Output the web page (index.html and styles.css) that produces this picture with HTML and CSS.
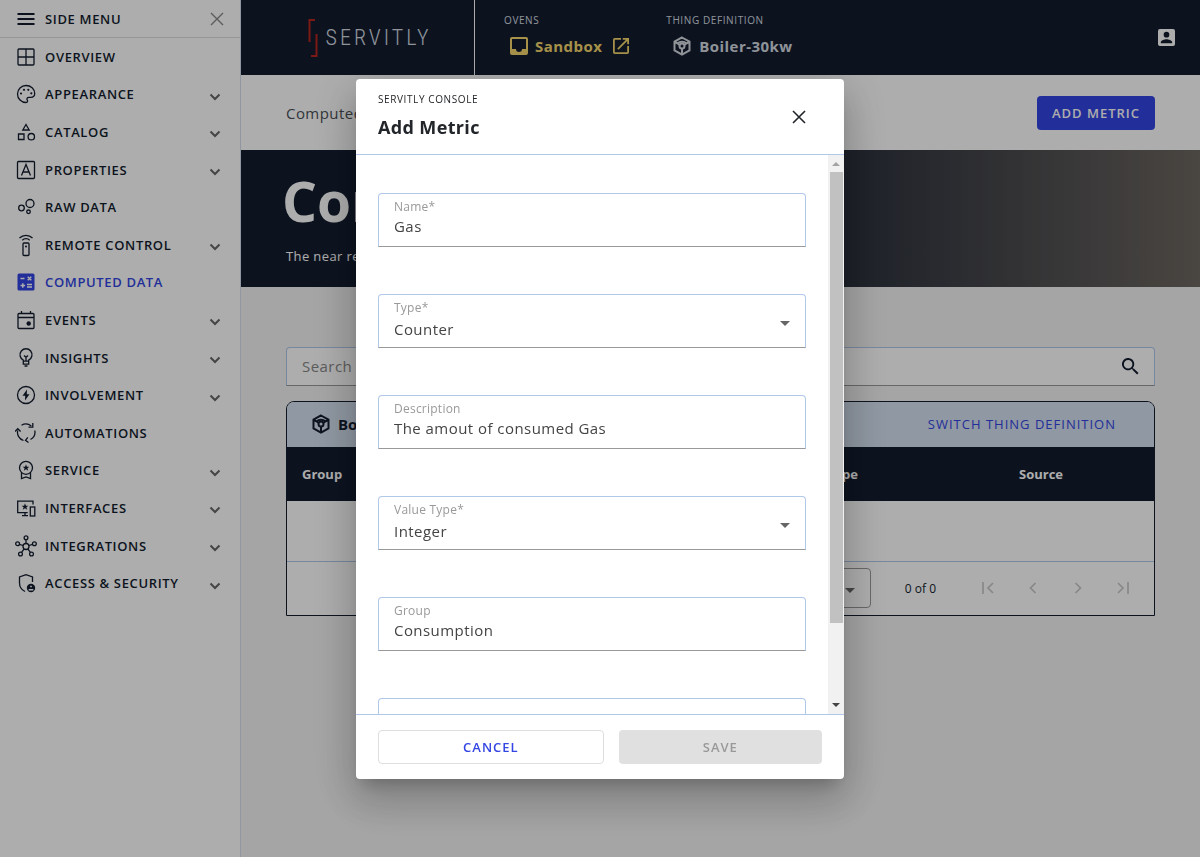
FILE: index.html
```html
<!DOCTYPE html>
<html lang="en">
<head>
	<meta charset="UTF-8">
	<meta name="viewport" content="width=device-width, initial-scale=1">
	<title>Servitly Console</title>
	<link rel="stylesheet" href="styles.css">
</head>
<body>
	<div class="app">
		<aside class="sidebar">
			<div class="side-head">
				<svg class="icon" viewBox="0 0 20 20"><path d="M1.500 5h17M1.500 10h17M1.500 15h17" stroke-width="2"/></svg>
				<span>SIDE MENU</span>
				<button class="side-close" type="button" aria-label="Close menu">
					<svg viewBox="0 0 14 14"><path d="M1 1l12 12M13 1L1 13"/></svg>
				</button>
			</div>
			<nav class="side-nav">
				<a href="#"><svg class="icon" viewBox="0 0 20 20"><rect x="2" y="2" width="16" height="16" rx="1"/><path d="M10 2v16M2 10h16"/></svg><span>OVERVIEW</span></a>
				<a href="#"><svg class="icon" viewBox="0 0 20 20"><path d="M10 1.500a8.500 8.500 0 0 0 0 17c1.500 0 2-1.200 1.300-2.300-.9-1.400-.1-2.900 1.500-2.900h2c2.300 0 3.900-1.500 3.900-3.800 0-4.500-3.900-8-8.700-8z"/><g class="fill"><circle cx="5" cy="9.500" r="1.100"/><circle cx="8" cy="5.800" r="1.100"/><circle cx="12.300" cy="5.800" r="1.100"/><circle cx="15.300" cy="9.300" r="1.100"/></g></svg><span>APPEARANCE</span><svg class="chev" viewBox="0 0 12 8"><path d="M1.500 1.500L6 6l4.500-4.500"/></svg></a>
				<a href="#"><svg class="icon" viewBox="0 0 20 20"><path d="M10 2.500L13.200 8H6.800zM2.500 12h5.500v5.500H2.500z"/><circle cx="15.300" cy="14.700" r="3.200"/></svg><span>CATALOG</span><svg class="chev" viewBox="0 0 12 8"><path d="M1.500 1.500L6 6l4.500-4.500"/></svg></a>
				<a href="#"><svg class="icon" viewBox="0 0 20 20"><rect x="1.500" y="1.500" width="17" height="17" rx="1"/><path d="M5.500 15.500L10 4.500l4.500 11M7 12h6"/></svg><span>PROPERTIES</span><svg class="chev" viewBox="0 0 12 8"><path d="M1.500 1.500L6 6l4.500-4.500"/></svg></a>
				<a href="#"><svg class="icon" viewBox="0 0 20 20"><circle cx="14" cy="6.500" r="4"/><circle cx="5.500" cy="11" r="2.800"/><circle cx="12.500" cy="14.800" r="1.800"/></svg><span>RAW DATA</span></a>
				<a href="#"><svg class="icon tall" viewBox="0 0 20 24"><rect x="7" y="10" width="6" height="12.500" rx="1"/><path d="M3.500 5c3.500-3.600 9.500-3.600 13 0M6.300 7.200c2-2 5.400-2 7.400 0"/><circle class="fill" cx="10" cy="13.500" r="1"/></svg><span>REMOTE CONTROL</span><svg class="chev" viewBox="0 0 12 8"><path d="M1.500 1.500L6 6l4.500-4.500"/></svg></a>
				<a class="active" href="#"><svg class="icon" viewBox="0 0 20 20"><rect class="fill" x="1.500" y="1.500" width="17" height="17" rx="1.500"/><path class="knock" d="M4.500 6.500h4M11.700 4.700l3.600 3.600M15.300 4.700l-3.600 3.600M4.500 13.500h4.600M6.800 11.200v4.600M11 12.500h5M11 15h5"/></svg><span>COMPUTED DATA</span></a>
				<a href="#"><svg class="icon" viewBox="0 0 20 20"><rect x="2" y="3.500" width="16" height="15" rx="1"/><path d="M2 7.500h16M5.500 1v2.500M14.500 1v2.500"/><circle class="fill" cx="12.700" cy="13.500" r="2.200"/></svg><span>EVENTS</span><svg class="chev" viewBox="0 0 12 8"><path d="M1.500 1.500L6 6l4.500-4.500"/></svg></a>
				<a href="#"><svg class="icon" viewBox="0 0 20 20"><path d="M7.300 13.200v-1.100a6 6 0 1 1 5.400 0v1.100zM7.300 13.200v3h5.400v-3M8 7.500l2 1.800 2-1.800M10 9.300v3.900M8.500 18h3"/></svg><span>INSIGHTS</span><svg class="chev" viewBox="0 0 12 8"><path d="M1.500 1.500L6 6l4.500-4.500"/></svg></a>
				<a href="#"><svg class="icon" viewBox="0 0 20 20"><circle cx="10" cy="10" r="8.500"/><path class="fill" d="M11 4.500L6.500 10.800h2.700L9 15.500l4.500-6.300h-2.700z"/></svg><span>INVOLVEMENT</span><svg class="chev" viewBox="0 0 12 8"><path d="M1.500 1.500L6 6l4.500-4.500"/></svg></a>
				<a href="#"><svg class="icon big" viewBox="0 0 22 22"><path d="M6.500 3.200a8.500 8.500 0 0 1 9.800.8M19.800 8.500a8.500 8.500 0 0 1-4.300 9M8.500 18.500a8.500 8.500 0 0 1-5.800-10"/><path d="M17.800 1v4.200h-4.300M0 9.500l2.800-2.800 2.800 2.800M13.500 20.500l-3-2.200 2.300-3"/></svg><span>AUTOMATIONS</span></a>
				<a href="#"><svg class="icon" viewBox="0 0 20 20"><circle cx="10" cy="7.800" r="6.500"/><path d="M5.500 12.800v5.700l4.500-1.500 4.500 1.500v-5.700"/><path class="fill" d="M10 4.300l.9 2.400h2.500l-2 1.500.8 2.500-2.200-1.500-2.200 1.500.8-2.500-2-1.500h2.500z"/></svg><span>SERVICE</span><svg class="chev" viewBox="0 0 12 8"><path d="M1.500 1.500L6 6l4.500-4.500"/></svg></a>
				<a href="#"><svg class="icon" viewBox="0 0 20 20"><path d="M17 6.500V3.200H1.700v11.500h10M9 14.700v3M6 17.700h6"/><rect x="14.300" y="9" width="4.500" height="9"/><path class="fill" d="M9 5.300l.9 2.400h2.500l-2 1.500.8 2.500L9 10.200l-2.200 1.500.8-2.500-2-1.500h2.500z"/></svg><span>INTERFACES</span><svg class="chev" viewBox="0 0 12 8"><path d="M1.500 1.500L6 6l4.500-4.500"/></svg></a>
				<a href="#"><svg class="icon big" viewBox="0 0 22 22"><circle cx="11" cy="11.500" r="3"/><circle cx="11" cy="2.700" r="1.900"/><circle cx="2.600" cy="8.700" r="1.900"/><circle cx="19.400" cy="8.700" r="1.900"/><circle cx="5.500" cy="19" r="1.900"/><circle cx="16.500" cy="19" r="1.900"/><path d="M11 4.600v3.900M4.400 9.300l3.700 1.200M17.600 9.300l-3.700 1.200M6.600 17.400l2.600-3.500M15.400 17.400l-2.600-3.500"/></svg><span>INTEGRATIONS</span><svg class="chev" viewBox="0 0 12 8"><path d="M1.500 1.500L6 6l4.500-4.500"/></svg></a>
				<a href="#"><svg class="icon" viewBox="0 0 20 20"><path d="M9 18.500c-3.500-1.700-5.500-4.500-5.500-8.500V4L10 1.600 16.500 4v5"/><circle class="fill" cx="15" cy="15" r="4.200"/><path class="knock" d="M12.700 16.800h4.600M14.200 13.400h1.600"/></svg><span>ACCESS &amp; SECURITY</span><svg class="chev" viewBox="0 0 12 8"><path d="M1.500 1.500L6 6l4.500-4.500"/></svg></a>
			</nav>
		</aside>

		<div class="main">
			<header class="topbar">
				<a class="logo" href="#">
					<svg viewBox="0 0 10 38"><path d="M7 1H1.500v22M3 37h5.500V15"/></svg>
					<span>SERVITLY</span>
				</a>
				<div class="crumb">
					<span class="crumb-label">OVENS</span>
					<a class="crumb-value gold" href="#">
						<svg viewBox="0 0 18 18"><path fill-rule="evenodd" d="M2 0h14a2 2 0 0 1 2 2v14a2 2 0 0 1-2 2H2a2 2 0 0 1-2-2V2a2 2 0 0 1 2-2zm0 2v10h4a3 3 0 0 0 6 0h4V2z"/></svg>
						<span>Sandbox</span>
						<svg class="out" viewBox="0 0 18 18"><path d="M16 16H2V2h7V0H2a2 2 0 0 0-2 2v14a2 2 0 0 0 2 2h14a2 2 0 0 0 2-2V9h-2zM11 0v2h3.600L4.800 11.800l1.400 1.400L16 3.400V7h2V0z"/></svg>
					</a>
				</div>
				<div class="crumb">
					<span class="crumb-label">THING DEFINITION</span>
					<a class="crumb-value" href="#">
						<svg class="cube" viewBox="0 0 20 20"><path d="M10 1.500l7.500 4.200v8.600L10 18.500l-7.500-4.200V5.700zM2.500 5.700l5 3M17.500 5.700l-5 3M10 12.500v6M5.500 7.400c2.500-2.200 6.500-2.200 9 0"/><circle cx="10" cy="10" r="2.500"/></svg>
						<span>Boiler-30kw</span>
					</a>
				</div>
				<button class="account" type="button" aria-label="Account">
					<svg viewBox="0 0 18 18"><path fill-rule="evenodd" d="M2 0h14a2 2 0 0 1 2 2v14a2 2 0 0 1-2 2H2a2 2 0 0 1-2-2V2a2 2 0 0 1 2-2zm7 3a3 3 0 1 0 0 6 3 3 0 0 0 0-6zM3 15h12v-1c0-2-4-3.100-6-3.100S3 12 3 14z"/></svg>
				</button>
			</header>

			<div class="toolbar">
				<span>Computed Data</span>
				<button class="btn primary" type="button">ADD METRIC</button>
			</div>

			<section class="hero">
				<h1>Computed</h1>
				<p>The near real-time computed metrics</p>
			</section>

			<main class="content">
				<div class="search">
					<input type="text" placeholder="Search" aria-label="Search">
					<svg viewBox="0 0 18 18"><path d="M12.500 11h-.8l-.3-.3a6.500 6.500 0 1 0-.7.7l.3.300v.8l5 5 1.500-1.500zm-6 0a4.500 4.500 0 1 1 0-9 4.500 4.500 0 0 1 0 9z"/></svg>
				</div>

				<div class="panel">
					<div class="panel-head">
						<svg class="cube" viewBox="0 0 20 20"><path d="M10 1.500l7.500 4.200v8.600L10 18.500l-7.500-4.200V5.700zM2.500 5.700l5 3M17.500 5.700l-5 3M10 12.500v6M5.500 7.400c2.500-2.200 6.500-2.200 9 0"/><circle cx="10" cy="10" r="2.500"/></svg>
						<strong>Boiler-30kw</strong>
						<a href="#">SWITCH THING DEFINITION</a>
					</div>
					<table>
						<thead>
							<tr>
								<th class="col">Group</th>
								<th class="col">Name</th>
								<th class="col">Label</th>
								<th class="col-type">Type</th>
								<th>Source</th>
							</tr>
						</thead>
						<tbody>
							<tr><td colspan="5"></td></tr>
						</tbody>
					</table>
					<div class="pager">
						<div class="page-size">
							<select aria-label="Items per page"><option>25</option></select>
							<svg class="arrow" viewBox="0 0 10 5"><path d="M0 0h10L5 5z"/></svg>
						</div>
						<span class="range">0 of 0</span>
						<div class="pages">
							<button type="button" disabled aria-label="First page"><svg viewBox="0 0 14 14"><path d="M2 1v12M12 2L7 7l5 5"/></svg></button>
							<button type="button" disabled aria-label="Previous page"><svg viewBox="0 0 14 14"><path d="M9.500 2l-5 5 5 5"/></svg></button>
							<button type="button" disabled aria-label="Next page"><svg viewBox="0 0 14 14"><path d="M4.500 2l5 5-5 5"/></svg></button>
							<button type="button" disabled aria-label="Last page"><svg viewBox="0 0 14 14"><path d="M12 1v12M2 2l5 5-5 5"/></svg></button>
						</div>
					</div>
				</div>
			</main>
		</div>
	</div>

	<div class="backdrop">
		<form class="modal" role="dialog" aria-labelledby="modal-title">
			<div class="modal-head">
				<div>
					<small>SERVITLY CONSOLE</small>
					<h2 id="modal-title">Add Metric</h2>
				</div>
				<button class="modal-close" type="button" aria-label="Close">
					<svg viewBox="0 0 14 14"><path d="M1 1l12 12M13 1L1 13"/></svg>
				</button>
			</div>

			<div class="modal-body">
				<div class="fields">
					<div class="field">
						<label for="name">Name*</label>
						<input id="name" type="text" value="Gas">
					</div>
					<div class="field">
						<label for="type">Type*</label>
						<select id="type"><option>Counter</option></select>
						<svg class="arrow" viewBox="0 0 10 5"><path d="M0 0h10L5 5z"/></svg>
					</div>
					<div class="field">
						<label for="description">Description</label>
						<input id="description" type="text" value="The amout of consumed Gas">
					</div>
					<div class="field">
						<label for="value-type">Value Type*</label>
						<select id="value-type"><option>Integer</option></select>
						<svg class="arrow" viewBox="0 0 10 5"><path d="M0 0h10L5 5z"/></svg>
					</div>
					<div class="field">
						<label for="group">Group</label>
						<input id="group" type="text" value="Consumption">
					</div>
					<div class="field">
						<input type="text" aria-label="Unit">
					</div>
				</div>
				<div class="scrollbar">
					<svg class="up" viewBox="0 0 8 4"><path d="M0 4h8L4 0z"/></svg>
					<div class="track"><div class="thumb"></div></div>
					<svg class="down" viewBox="0 0 8 4"><path d="M0 0h8L4 4z"/></svg>
				</div>
			</div>

			<div class="modal-foot">
				<button class="btn cancel" type="button">CANCEL</button>
				<button class="btn save" type="submit" disabled>SAVE</button>
			</div>
		</form>
	</div>
</body>
</html>
```
FILE: styles.css
```css
* {
	box-sizing: border-box;
	margin: 0;
	padding: 0;
}
body {
	background: #f3f3f3;
	color: #131d2f;
	font-family: "Open Sans", "Noto Sans", sans-serif;
	font-size: 15px;
}
a {
	color: inherit;
	text-decoration: none;
}
button,
input,
select {
	font: inherit;
	color: inherit;
	background: none;
	border: 0;
	outline: 0;
}
svg {
	display: block;
	flex: none;
	fill: currentColor;
}
.app {
	display: flex;
	min-height: 100vh;
}

/* side menu */
.sidebar {
	flex: none;
	width: 241px;
	background: #fff;
	border-right: 1px solid #d6dfee;
	font-size: 13px;
	font-weight: 600;
	letter-spacing: 0.05em;
}
.side-head {
	display: flex;
	align-items: center;
	height: 38px;
	padding: 0 16px;
	border-bottom: 1px solid #dcdcdc;
}
.icon {
	width: 20px;
	height: 20px;
	margin-right: 9px;
	fill: none;
	stroke: currentColor;
	stroke-width: 1.3;
}
.icon.tall {
	height: 24px;
}
.icon.big {
	width: 22px;
	height: 22px;
	margin: 0 8px 0 -1px;
}
.icon .fill {
	fill: currentColor;
	stroke: none;
}
.icon .knock {
	stroke: #fff;
	stroke-width: 1.5;
}
.side-close {
	margin-left: auto;
	color: #888;
}
.side-close svg {
	width: 14px;
	height: 14px;
	stroke: currentColor;
	stroke-width: 1.4;
}
.side-nav {
	display: flex;
	flex-direction: column;
	height: 564px;
}
.side-nav a {
	display: flex;
	flex: 1;
	align-items: center;
	padding: 0 19px 0 16px;
}
.side-nav .active {
	color: #3345e2;
}
.chev {
	width: 12px;
	height: 8px;
	margin: 5px 0 0 auto;
	fill: none;
	stroke: #666;
	stroke-width: 2;
}

/* top bar */
.main {
	flex: 1;
	min-width: 0;
}
.topbar {
	display: flex;
	height: 75px;
	padding-right: 25px;
	background: #131d2f;
	color: #d5dbe2;
}
.logo {
	display: flex;
	align-items: center;
	justify-content: center;
	gap: 8px;
	width: 234px;
	margin-right: 29px;
	padding-left: 24px;
	border-right: 1px solid #fff;
	font-family: "Roboto Condensed", "Liberation Sans Narrow", Roboto, sans-serif;
	font-size: 22px;
	font-weight: 300;
	letter-spacing: 3px;
}
.logo svg {
	width: 10px;
	height: 38px;
	fill: none;
	stroke: #b5251f;
	stroke-width: 2;
}
.crumb {
	padding-top: 13px;
	margin-right: 37px;
}
.crumb-label {
	display: block;
	font-size: 10px;
	line-height: 14px;
	letter-spacing: 0.06em;
}
.crumb-value {
	display: flex;
	align-items: center;
	gap: 7px;
	padding: 8px 0 0 6px;
	font-weight: 700;
	line-height: 22px;
	letter-spacing: 0.03em;
}
.crumb-value svg {
	width: 18px;
	height: 18px;
}
.crumb-value .out {
	width: 16px;
	height: 16px;
	margin-left: 4px;
}
.gold {
	color: #f7d76d;
}
svg.cube {
	width: 20px;
	height: 20px;
	fill: none;
	stroke: currentColor;
	stroke-width: 2;
}
.account {
	margin-left: auto;
	color: #fff;
}
.account svg {
	width: 17px;
	height: 17px;
}

/* title strip */
.toolbar {
	display: flex;
	align-items: center;
	justify-content: space-between;
	height: 75px;
	padding: 0 45px;
	background: #fff;
	color: #4a5058;
	letter-spacing: 0.03em;
}
.btn {
	height: 34px;
	border-radius: 4px;
	font-size: 13px;
	font-weight: 600;
	letter-spacing: 1px;
}
.primary {
	padding: 0 15px;
	background: #3345e2;
	color: #fff;
}
.hero {
	height: 137px;
	padding: 13px 45px;
	background: linear-gradient(90deg, #131d2f 50%, #6d6761);
	color: #fff;
}
.hero h1 {
	margin-left: -4px;
	font-size: 55px;
	line-height: 76px;
}
.hero p {
	margin-top: 7px;
	font-size: 13px;
	line-height: 20px;
	letter-spacing: 0.03em;
}

/* list */
.content {
	padding: 60px 45px;
}
.search {
	display: flex;
	align-items: center;
	height: 39px;
	margin-bottom: 15px;
	padding: 0 15px 1px;
	background: #fff;
	border: 1px solid #b0c8ea;
	border-bottom-color: #999;
	border-radius: 4px 4px 0 0;
}
.search input {
	flex: 1;
	letter-spacing: 0.03em;
}
.search input::placeholder {
	color: #888;
}
.search svg {
	width: 17px;
	height: 17px;
}
.panel {
	background: #fff;
	border: 1px solid #131d2f;
	border-radius: 8px 8px 0 0;
}
.panel-head {
	display: flex;
	align-items: center;
	gap: 7px;
	height: 45px;
	padding: 0 38px 2px 24px;
	background: #d4e0f0;
	border-radius: 7px 7px 0 0;
}
.panel-head a {
	margin-left: auto;
	color: #3345e2;
	font-size: 13px;
	font-weight: 500;
	letter-spacing: 1px;
}
table {
	width: 100%;
	table-layout: fixed;
	border-collapse: collapse;
	font-size: 13px;
}
th {
	height: 54px;
	padding: 0 15px;
	background: #131d2f;
	color: #fff;
	text-align: left;
}
.col {
	width: 175px;
}
.col-type {
	width: 192px;
}
td {
	height: 60px;
	border-bottom: 1px solid #b0c8ea;
}
.pager {
	display: flex;
	align-items: center;
	justify-content: flex-end;
	height: 53px;
	padding-right: 24px;
	font-size: 12px;
}
.page-size {
	position: relative;
	width: 80px;
	height: 40px;
	border: 1px solid #999;
	border-radius: 4px;
}
.page-size select {
	width: 100%;
	height: 100%;
	padding-left: 12px;
	appearance: none;
}
.arrow {
	position: absolute;
	right: 15px;
	width: 10px;
	height: 5px;
	top: 50%;
	color: #666;
	pointer-events: none;
}
.range {
	margin: 0 45px 0 34px;
}
.pages {
	display: flex;
	gap: 31px;
}
.pages svg {
	width: 14px;
	height: 14px;
	fill: none;
	stroke: #c8c8c8;
	stroke-width: 1.7;
}

/* dialog */
.backdrop {
	position: fixed;
	inset: 0;
	display: flex;
	align-items: center;
	justify-content: center;
	background: rgba(0, 0, 0, 0.32);
}
.modal {
	display: flex;
	flex-direction: column;
	width: 488px;
	max-width: 90vw;
	height: calc(100vh - 157px);
	background: #fff;
	border-radius: 4px;
	box-shadow: 0 11px 15px -7px rgba(0, 0, 0, 0.2), 0 24px 38px 3px rgba(0, 0, 0, 0.14), 0 9px 46px 8px rgba(0, 0, 0, 0.12);
	color: #222529;
}
.modal-head {
	display: flex;
	align-items: center;
	justify-content: space-between;
	height: 76px;
	padding: 1px 38px 0 22px;
	border-bottom: 1px solid #b0c8ea;
}
.modal-head small {
	display: block;
	font-size: 10px;
	line-height: 14px;
	letter-spacing: 0.06em;
}
.modal-head h2 {
	margin-top: 7px;
	font-size: 18px;
	font-weight: 700;
	line-height: 28px;
	letter-spacing: 0.02em;
}
.modal-close svg {
	width: 14px;
	height: 14px;
	stroke: currentColor;
	stroke-width: 1.6;
}
.modal-body {
	display: flex;
	flex: 1;
	min-height: 0;
}
.fields {
	display: flex;
	flex: 1;
	flex-direction: column;
	gap: 47px;
	padding: 38px 22px 0;
	overflow: hidden;
}
.field {
	position: relative;
	flex: none;
	height: 54px;
	padding: 5px 15px 0;
	border: 1px solid #b0c8ea;
	border-bottom-color: #999;
	border-radius: 4px 4px 0 0;
}
.field label {
	display: block;
	color: #999;
	font-size: 12px;
	line-height: 16px;
	letter-spacing: 0.02em;
}
.field input,
.field select {
	display: block;
	width: 100%;
	height: 22px;
	color: #444;
	letter-spacing: 0.03em;
	appearance: none;
}
.field select {
	height: 26px;
}
.scrollbar {
	display: flex;
	flex-direction: column;
	align-items: center;
	width: 16px;
	padding: 7px 0;
	background: #f1f1f1;
}
.scrollbar svg {
	width: 8px;
	height: 4px;
	color: #444;
}
.scrollbar .up {
	color: #a3a3a3;
}
.track {
	flex: 1;
	width: 13px;
	margin: 6px 0;
}
.thumb {
	height: 86%;
	background: #c1c1c1;
}
.modal-foot {
	display: flex;
	gap: 15px;
	padding: 15px 22px;
	border-top: 1px solid #b0c8ea;
}
.cancel {
	flex: 11;
	border: 1px solid #dedede;
	color: #3345e2;
}
.save {
	flex: 10;
	background: #e0e0e0;
	color: #999;
}
```
